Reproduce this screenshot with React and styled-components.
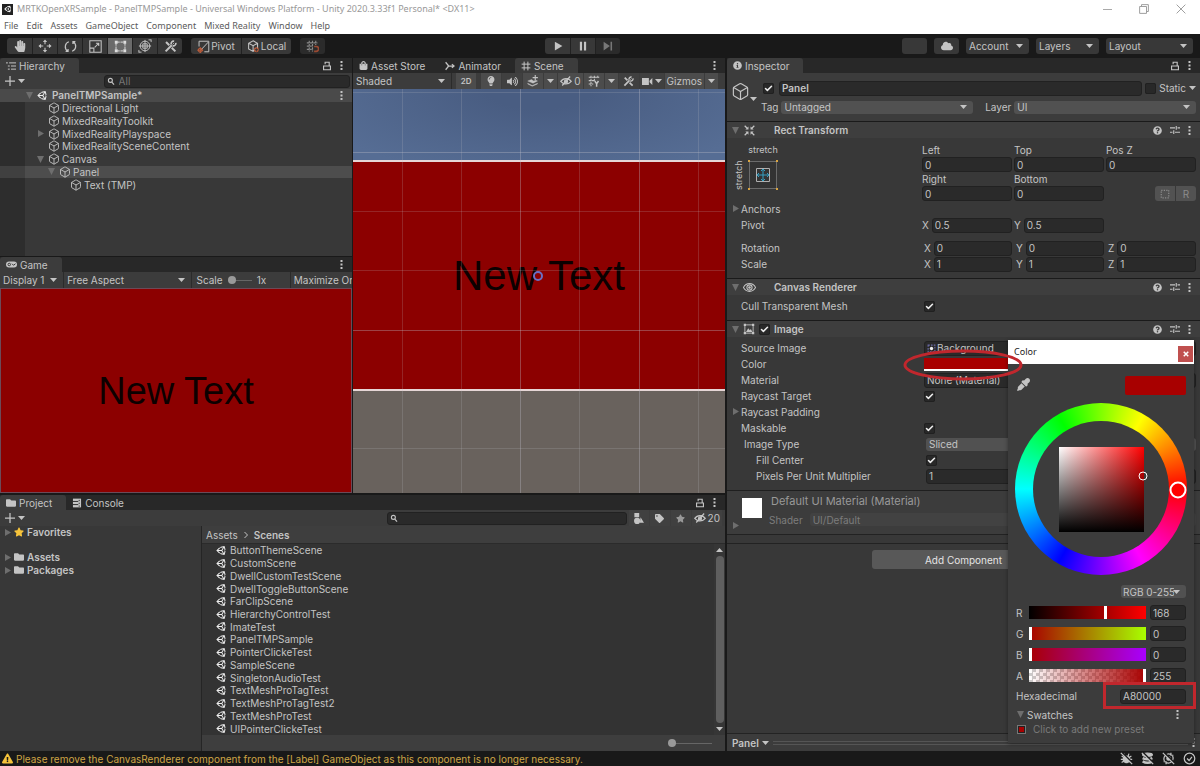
import React, { useId } from "react";
import styled, { createGlobalStyle, css } from "styled-components";
import { Box, Check } from "lucide-react";
import {
  FaCloud,
  FaEyeDropper,
  FaFolder,
  FaHandPaper,
  FaInfoCircle,
  FaLightbulb,
  FaQuestionCircle,
  FaShoppingBag,
  FaStar,
  FaTag,
  FaUnity,
  FaVolumeUp,
  FaExclamationTriangle,
} from "react-icons/fa";

const scenes = [
  "ButtonThemeScene",
  "CustomScene",
  "DwellCustomTestScene",
  "DwellToggleButtonScene",
  "FarClipScene",
  "HierarchyControlTest",
  "ImateTest",
  "PanelTMPSample",
  "PointerClickeTest",
  "SampleScene",
  "SingletonAudioTest",
  "TextMeshProTagTest",
  "TextMeshProTagTest2",
  "TextMeshProTest",
  "UIPointerClickeTest",
];

const tree = [
  { name: "Directional Light", level: 1 },
  { name: "MixedRealityToolkit", level: 1 },
  { name: "MixedRealityPlayspace", level: 1, fold: "closed" },
  { name: "MixedRealitySceneContent", level: 1 },
  { name: "Canvas", level: 1, fold: "open" },
  { name: "Panel", level: 2, fold: "open", selected: true },
  { name: "Text (TMP)", level: 3 },
];

const menus = ["File", "Edit", "Assets", "GameObject", "Component", "Mixed Reality", "Window", "Help"];

/* ---------- icons ---------- */

const Svg = ({ size = 12, width, children, ...rest }) => (
  <svg
    width={width || size}
    height={size}
    viewBox={`0 0 ${width ? (16 * width) / size : 16} 16`}
    fill="none"
    stroke="currentColor"
    strokeWidth="1.5"
    aria-hidden="true"
    {...rest}
  >
    {children}
  </svg>
);

const Caret = () => (
  <svg width="7" height="4" viewBox="0 0 7 4" aria-hidden="true">
    <path d="M0 0h7L3.5 4z" fill="currentColor" />
  </svg>
);

const Fold = ({ open }) => (
  <svg width="7" height="7" viewBox="0 0 7 7" aria-hidden="true">
    <path d={open ? "M0 0h7L3.5 7z" : "M1 0v7l6-3.5z"} fill="#6e6e6e" />
  </svg>
);

const Kebab = () => (
  <svg width="3" height="11" viewBox="0 0 3 11" fill="currentColor" aria-hidden="true">
    <path d="M0.5 1h2v2h-2zM0.5 4.5h2v2h-2zM0.5 8h2v2h-2z" />
  </svg>
);

const Lock = () => (
  <Svg size={10} strokeWidth="1.8">
    <path d="M2.500 8h11v6h-11zM5 5V2h6.500v6" />
  </Svg>
);

const Search = () => (
  <Svg size={9} width={10}>
    <circle cx="6" cy="6" r="3.5" strokeWidth="2" />
    <path d="M8.5 9l4 4.5" strokeWidth="2.2" />
  </Svg>
);

const Move = () => (
  <Svg size={14} strokeWidth="1.3">
    <path d="M8 2v4M8 10v4M2 8h4M10 8h4" />
    <path d="M8 .5l2.5 3h-5zM8 15.5l2.5-3h-5zM.5 8l3-2.5v5zM15.5 8l-3-2.5v5z" fill="currentColor" stroke="none" />
  </Svg>
);

const Rotate = () => (
  <Svg size={13}>
    <path d="M4.5 13.5A6.3 6.3 0 0 1 6 2.2M11.5 2.5A6.3 6.3 0 0 1 10 13.8M2 14h3v-3M14 2h-3v3" />
  </Svg>
);

const Scale = () => (
  <Svg size={13} strokeWidth="1.3">
    <path d="M1 1h14v14H1zM1 10h5v5M7 9l5-5M8.5 4H12v3.5" />
  </Svg>
);

const RectTool = () => (
  <Svg size={13} strokeWidth="1.5">
    <path d="M4 2.5h8M4 13.5h8M2.500 4v8M13.5 4v8" strokeDasharray="3 1" />
    <path d="M1 1h3.500v3.500H1zM11.500 1H15v3.500h-3.500zM1 11.500h3.500V15H1zM11.500 11.500H15V15h-3.500z" fill="#ddd" stroke="none" />
  </Svg>
);

const TransformTool = () => (
  <Svg size={14} strokeWidth="1.1">
    <circle cx="8" cy="8" r="5.5" />
    <path d="M8 1v14M1 8h14M5.5 5.5h5v5h-5zM1 15.500v-3M1 15h3M15 .5v3M15 1h-3" />
  </Svg>
);

const Tools = ({ size = 13 }) => (
  <Svg size={size}>
    <path d="M2.5 2.5l4 4M9.5 9.5l4.5 4.5" strokeWidth="2.5" />
    <path d="M2 14l7.5-7.5" strokeWidth="2.5" />
    <path d="M14.5 3.5a3 3 0 0 1-4 3.5M12.5 1.5a3 3 0 0 0-3.5 4" strokeWidth="2" />
    <path d="M12.5 3.5l-2 2" strokeWidth="1" />
  </Svg>
);

const PivotIcon = () => (
  <Svg size={13} strokeWidth="1.2">
    <path d="M2.5 8V1.5h12v13H9M5 12l9-9.5" />
    <circle cx="4" cy="12.5" r="2.5" stroke="#c8603c" />
    <path d="M.5 12.5h7M4 9v7" stroke="#c8603c" />
  </Svg>
);

const LocalIcon = () => (
  <Svg size={13} strokeWidth="1.3">
    <path d="M7.5 1l5.5 3v6l-5.5 4L2 11V4zM2 4l5.5 3L13 4M7.5 7v7" />
    <circle cx="11.5" cy="12" r="3" fill="#c8603c" stroke="none" />
    <path d="M11.5 10v4M9.5 12h4" stroke="#383838" />
  </Svg>
);

const SnapIcon = () => (
  <Svg size={13} strokeWidth="1.4">
    <path d="M4 1v13M8 1v13M12 1v5M1 3.5h13M1 7.5h6M1 11.5h6" strokeDasharray="3 1" stroke="#8c8c8c" />
    <path d="M10 8h2.5a2.5 2.5 0 0 1 0 6H10" stroke="#9a4a32" strokeWidth="2" />
  </Svg>
);

const ListIcon = () => (
  <Svg size={10} strokeWidth="1.6">
    <path d="M5 3h11M8 8h8M8 13h8M0 3h3M3 8h3M3 13h3" />
  </Svg>
);

const AnimatorIcon = () => (
  <Svg size={10}>
    <path d="M1 2l5 6-5 6M4 8h10M11 5l3.5 3-3.5 3" strokeWidth="2" />
  </Svg>
);

const HashIcon = () => (
  <Svg size={10}>
    <path d="M5 1v14M11 1v14M1 5h14M1 11h14" strokeWidth="1.6" />
  </Svg>
);

const GamepadIcon = () => (
  <svg width="11" height="7" viewBox="0 0 22 14" fill="none" stroke="currentColor" aria-hidden="true">
    <rect x="0" y="1" width="22" height="12" rx="6" fill="currentColor" stroke="none" />
    <circle cx="6.5" cy="7" r="2.5" stroke="#383838" strokeWidth="2" />
    <path d="M12 5.5l3 3 4-3" stroke="#383838" strokeWidth="2" />
  </svg>
);

const EffectsIcon = () => (
  <Svg size={12}>
    <path d="M1 8l5-2 3 2 3-1 2 1-6 3zM1 11l6 3 7-3v1l-7 3-6-3z" fill="currentColor" strokeWidth=".5" />
    <path d="M11 0v7M7.500 3.5h7" strokeWidth="1.5" />
  </Svg>
);

const EyeSlash = () => (
  <Svg size={12} strokeWidth="1.6">
    <path d="M1 8.5C4.5 3.5 11.5 3.5 15 8.5 11.5 13 4.5 13 1 8.5zM3 14L13.5 2" />
    <circle cx="8" cy="8.5" r="2" fill="currentColor" />
  </Svg>
);

const EyeIcon = () => (
  <Svg size={13} strokeWidth="1.3">
    <path d="M.5 8C4 1.5 12 1.5 15.5 8 12 14.5 4 14.5.5 8z" />
    <circle cx="8" cy="8" r="3.2" />
    <circle cx="8" cy="8" r="1" fill="currentColor" />
  </Svg>
);

const GridY = () => (
  <Svg size={12} strokeWidth="1.4">
    <path d="M4 1v14M8.5 1v7M13 1v4M1 3h14M1 7.5h8M1 12h6" strokeDasharray="3 1" />
    <path d="M9 8l2.5 3.5L14 8M11.5 11v4.5" strokeWidth="2" />
  </Svg>
);

const CameraIcon = () => (
  <Svg size={11}>
    <path d="M0 3h10v10H0zM11 7l4-4v10l-4-4z" fill="currentColor" stroke="none" />
  </Svg>
);

const ConsoleIcon = () => (
  <Svg size={10}>
    <path d="M1.5 1h13v14h-13z" fill="currentColor" stroke="none" />
    <path d="M1 5.5h9M1 10.5h9M11.5 3v2M11.5 7.5v2M11.5 12v2" stroke="#282828" />
  </Svg>
);

const ShapesIcon = () => (
  <Svg size={11}>
    <path d="M2 0h7v6H2zM11 6l5 8h-6z" fill="currentColor" stroke="none" />
    <circle cx="6" cy="11.5" r="4.5" fill="currentColor" stroke="none" />
  </Svg>
);

const RectTransformIcon = () => (
  <Svg size={11}>
    <path d="M1 1l4 4M15 1l-4 4M1 15l4-4M15 15l-4-4" strokeWidth="1.8" />
    <path d="M6.500 2v4.500H2zM9.500 2v4.500H14zM6.500 14V9.500H2zM9.500 14V9.500H14z" fill="currentColor" stroke="none" />
  </Svg>
);

const ImageIcon = () => (
  <Svg size={12} strokeWidth="1.2">
    <path d="M2.5 2.5h11v11h-11z" />
    <path d="M1 1h3v3H1zM12 1h3v3h-3zM1 12h3v3H1zM12 12h3v3h-3zM4 12l3-5 2 2.5 1.5-1.5 2 4z" fill="currentColor" stroke="none" />
  </Svg>
);

const SliderIcon = () => (
  <Svg size={10}>
    <path d="M0 4.5h8M12 4.5h4M0 11.5h4M8 11.5h8M10 1.5v6M6 8.5v6" strokeWidth="1.8" />
  </Svg>
);

const Struck = ({ children }) => (
  <Svg size={13}>
    {children}
    <path d="M2.500 .5l13 13" stroke="#191919" strokeWidth="2" />
    <path d="M1 1l14 14" strokeWidth="1.5" />
  </Svg>
);

/* ---------- shell ---------- */

const GlobalStyle = createGlobalStyle`
  * { box-sizing: border-box; }
  body {
    margin: 0;
    background: #191919;
    color: #c4c4c4;
    font: 10px/12px Inter, "Liberation Sans", sans-serif;
  }
  button, input, select {
    margin: 0;
    padding: 0;
    border: 0;
    color: inherit;
    font: inherit;
    background: none;
  }
  svg { flex: none; }
`;

const App = () => (
  <Editor>
    <GlobalStyle />
    <TitleBar>
      <AppIcon>
        <FaUnity size={8} />
      </AppIcon>
      <Title>MRTKOpenXRSample - PanelTMPSample - Universal Windows Platform - Unity 2020.3.33f1 Personal* &lt;DX11&gt;</Title>
      <WindowButtons>
        <button aria-label="Minimize">
          <Svg size={9}><path d="M0 8h16" /></Svg>
        </button>
        <button aria-label="Restore">
          <Svg size={10}><path d="M1 4h11v11H1zM4 4V1h11v11h-3" /></Svg>
        </button>
        <button aria-label="Close">
          <Svg size={10}><path d="M1 1l14 14M15 1L1 15" /></Svg>
        </button>
      </WindowButtons>
    </TitleBar>
    <MenuBar>
      {menus.map((m) => (
        <button key={m}>{m}</button>
      ))}
    </MenuBar>
    <MainToolbar />
    <Workspace>
      <Left>
        <Upper>
          <Stack>
            <Hierarchy />
            <Game />
          </Stack>
          <Scene />
        </Upper>
        <Project />
      </Left>
      <Inspector />
    </Workspace>
    <StatusBar>
      <FaExclamationTriangle size={11} color="#f5c33b" />
      <StatusText>
        Please remove the CanvasRenderer component from the [Label] GameObject as this component is no longer necessary.
      </StatusText>
      <Struck>
        <circle cx="8" cy="9" r="4" fill="currentColor" />
        <path d="M2 5l12 8M14 5L2 13M1 9h14M5 2l1 3M11 2l-1 3" />
      </Struck>
      <Struck>
        <ellipse cx="8" cy="3.500" rx="6" ry="2" fill="currentColor" />
        <path d="M2 7.500q6 3 12 0M2 11.500q6 3.500 12 0" strokeWidth="3" />
      </Struck>
      <Struck>
        <path d="M3 11a6 6 0 0 1 8-8M13 5a6 6 0 0 1-8 8M11 1v3h3M5 15v-3H2" />
        <circle cx="8" cy="8" r="2" fill="currentColor" />
      </Struck>
      <Svg size={13}>
        <circle cx="8" cy="8" r="6.5" />
        <path d="M5 8l2.5 2.5L11 6" />
      </Svg>
    </StatusBar>
  </Editor>
);

const MainToolbar = () => (
  <ToolStrip>
    <ToolSide>
      <Group>
        <Tool aria-label="Hand"><FaHandPaper size={12} /></Tool>
        <Tool aria-label="Move"><Move /></Tool>
        <Tool aria-label="Rotate"><Rotate /></Tool>
        <Tool aria-label="Scale"><Scale /></Tool>
        <Tool aria-label="Rect" $on><RectTool /></Tool>
        <Tool aria-label="Transform"><TransformTool /></Tool>
        <Tool aria-label="Custom tools"><Tools /></Tool>
      </Group>
      <Group>
        <Tool $wide><PivotIcon />Pivot</Tool>
        <Tool $wide><LocalIcon />Local</Tool>
      </Group>
      <Group>
        <Tool aria-label="Snap" $off><SnapIcon /></Tool>
      </Group>
    </ToolSide>
    <Group>
      <Tool aria-label="Play">
        <Svg size={10}><path d="M3 1l12 7-12 7z" fill="currentColor" stroke="none" /></Svg>
      </Tool>
      <Tool aria-label="Pause">
        <Svg size={10}><path d="M3 1h3.5v14H3zM9.5 1H13v14H9.5z" fill="currentColor" stroke="none" /></Svg>
      </Tool>
      <Tool aria-label="Step" $off>
        <Svg size={10}><path d="M1 1l10 7-10 7zM12 1h2.5v14H12z" fill="currentColor" stroke="none" /></Svg>
      </Tool>
    </Group>
    <ToolSide $end>
      <Group><Tool aria-label="Collab" /></Group>
      <Group><Tool aria-label="Services"><FaCloud size={12} /></Tool></Group>
      <BarSelect><Dropdown label="Account" tone="#383838" /></BarSelect>
      <BarSelect><Dropdown label="Layers" tone="#383838" /></BarSelect>
      <BarSelect $wide><Dropdown label="Layout" tone="#383838" /></BarSelect>
    </ToolSide>
  </ToolStrip>
);

const Dropdown = ({ label, name, tone, id, grow }) => (
  <Drop $tone={tone} $grow={grow}>
    <select id={id} aria-label={id ? undefined : name || label} defaultValue={label}>
      <option>{label}</option>
    </select>
    <Caret />
  </Drop>
);

const CheckBox = ({ checked, label, id }) => (
  <Tick>
    <input type="checkbox" id={id} aria-label={label} defaultChecked={checked} />
    {checked && <Check size={9} strokeWidth={4} />}
  </Tick>
);

/* ---------- left side ---------- */

const Hierarchy = () => (
  <Pane $grow={198}>
    <Tabs>
      <Tab $on><ListIcon />Hierarchy</Tab>
      <TabTools><Lock /><Kebab /></TabTools>
    </Tabs>
    <PaneBar>
      <AddButton aria-label="Create">
        <Svg size={10}><path d="M8 0v16M0 8h16" strokeWidth="2" /></Svg>
        <Caret />
      </AddButton>
      <SearchBox $wide>
        <Search />
        <input aria-label="Search hierarchy" placeholder="All" />
      </SearchBox>
    </PaneBar>
    <TreeWell>
      <Tree>
        <Node $root>
          <FoldSlot><Fold open /></FoldSlot>
          <FaUnity size={11} color="#eee" />
          <b>PanelTMPSample*</b>
          <NodeMenu><Kebab /></NodeMenu>
        </Node>
        {tree.map((n) => (
          <Node key={n.name} $level={n.level} $selected={n.selected}>
            <FoldSlot>{n.fold && <Fold open={n.fold === "open"} />}</FoldSlot>
            <Box size={12} strokeWidth={1.8} />
            {n.name}
          </Node>
        ))}
      </Tree>
    </TreeWell>
  </Pane>
);

const Game = () => (
  <Pane $grow={236}>
    <Tabs>
      <Tab $on><GamepadIcon />Game</Tab>
      <TabTools><Kebab /></TabTools>
    </Tabs>
    <GameBar>
      <Dropdown label="Display 1" tone="transparent" />
      <Dropdown label="Free Aspect" tone="transparent" />
      <ScaleLabel>
        Scale
        <Slider type="range" defaultValue="0" />
        1x
      </ScaleLabel>
      <button>Maximize On</button>
    </GameBar>
    <GameView>New Text</GameView>
  </Pane>
);

const Scene = () => (
  <ScenePane>
    <Tabs>
      <Tab><FaShoppingBag size={9} />Asset Store</Tab>
      <Tab><AnimatorIcon />Animator</Tab>
      <Tab $on><HashIcon />Scene</Tab>
      <TabTools><Kebab /></TabTools>
    </Tabs>
    <SceneBar>
      <ShadeSelect><Dropdown label="Shaded" tone="transparent" /></ShadeSelect>
      <Mini $on>
        <small>2D</small>
      </Mini>
      <BarGap />
      <Mini $on aria-label="Lighting"><FaLightbulb size={10} /></Mini>
      <Mini aria-label="Audio"><FaVolumeUp size={11} /></Mini>
      <Mini $on aria-label="Effects"><EffectsIcon /></Mini>
      <Mini $on $slim aria-label="Effects menu"><Caret /></Mini>
      <Mini $on><EyeSlash />0</Mini>
      <Mini $on aria-label="Grid"><GridY /></Mini>
      <Mini $on $slim aria-label="Grid menu"><Caret /></Mini>
      <Mini aria-label="Component tools"><Tools size={11} /></Mini>
      <Mini aria-label="Camera"><CameraIcon /><Caret /></Mini>
      <Mini $on>Gizmos</Mini>
      <Mini $on $slim aria-label="Gizmos menu"><Caret /></Mini>
    </SceneBar>
    <SceneView>
      <Sky />
      <Quad>New Text</Quad>
      <Ground />
      <GridLines viewBox="0 0 372 404" preserveAspectRatio="none" aria-hidden="true">
        <path d="M49.5 0v404M108.5 0v404M226.5 0v404M345.5 0v404M0 3.5h372M0 122.5h372M0 181.5h372M0 359.5h372" opacity=".55" />
        <path d="M167.5 0v404M286.5 0v404M0 63.5h372M0 241.5h372" />
      </GridLines>
      <Gizmo />
    </SceneView>
  </ScenePane>
);

const Project = () => (
  <ProjectPane>
    <Tabs>
      <Tab $on><FaFolder size={10} />Project</Tab>
      <Tab><ConsoleIcon />Console</Tab>
      <TabTools><Lock /><Kebab /></TabTools>
    </Tabs>
    <PaneBar>
      <AddButton aria-label="Create asset">
        <Svg size={10}><path d="M8 0v16M0 8h16" strokeWidth="2" /></Svg>
        <Caret />
      </AddButton>
      <SearchBox>
        <Search />
        <input aria-label="Search project" />
      </SearchBox>
      <Filters>
        <Mini aria-label="Search by type"><ShapesIcon /></Mini>
        <Mini aria-label="Search by label"><FaTag size={9} /></Mini>
        <Mini aria-label="Save search"><FaStar size={9} color="#999" /></Mini>
        <Mini><EyeSlash />20</Mini>
      </Filters>
    </PaneBar>
    <Browser>
      <Folders>
        <FolderRow $gap><Fold /><FaStar size={10} color="#f5c33b" />Favorites</FolderRow>
        <FolderRow><Fold /><FaFolder size={10} />Assets</FolderRow>
        <FolderRow><Fold /><FaFolder size={10} />Packages</FolderRow>
      </Folders>
      <Files>
        <Crumbs>
          Assets
          <Svg size={8}><path d="M5 2l6 6-6 6" strokeWidth="2" /></Svg>
          <b>Scenes</b>
        </Crumbs>
        <FileArea>
          <FileList>
            {scenes.map((s) => (
              <li key={s}>
                <FaUnity size={11} color="#eee" />
                {s}
              </li>
            ))}
          </FileList>
          <ScrollTrack>
            <Flip><Caret /></Flip>
            <ScrollThumb />
            <Caret />
          </ScrollTrack>
        </FileArea>
        <FileFooter>
          <Slider type="range" defaultValue="0" aria-label="Icon size" />
        </FileFooter>
      </Files>
    </Browser>
  </ProjectPane>
);

/* ---------- inspector ---------- */

const CompHeader = ({ icon, title, check }) => (
  <CompBar>
    <FoldSlot><Fold open /></FoldSlot>
    <IconSlot>{icon}</IconSlot>
    <CheckSlot>{check && <CheckBox checked label={`${title} enabled`} />}</CheckSlot>
    <b>{title}</b>
    <CompTools>
      <FaQuestionCircle size={9} />
      <SliderIcon />
      <Kebab />
    </CompTools>
  </CompBar>
);

const Row = ({ label, indent, fold, children }) => {
  const id = useId();
  return (
    <PropRow>
      <PropLabel htmlFor={children ? id : undefined} $indent={indent}>
        {fold && <PropFold><Fold /></PropFold>}
        {label}
      </PropLabel>
      {children && <PropValue $indent={indent}>{children(id)}</PropValue>}
    </PropRow>
  );
};

const Vector = ({ label, axes, value, inset }) => (
  <PropRow>
    <PropLabel as="span">{label}</PropLabel>
    <Triple>
      {axes.map((a) => (
        <Axis key={a} $inset={inset}>
          {a}
          <Field defaultValue={value} />
        </Axis>
      ))}
    </Triple>
  </PropRow>
);

const Edge = ({ label, value = "0" }) => (
  <EdgeLabel>
    {label}
    <Field defaultValue={value} />
  </EdgeLabel>
);

const Inspector = () => (
  <InspectorPane>
    <Tabs>
      <Tab $on><FaInfoCircle size={9} />Inspector</Tab>
      <TabTools><Lock /><Kebab /></TabTools>
    </Tabs>
    <ObjectHeader>
      <BigCube>
        <Box size={19} strokeWidth={1.5} />
        <Caret />
      </BigCube>
      <HeaderRows>
        <HeaderRow $inset>
          <CheckBox checked label="Active" />
          <NameField aria-label="Name" defaultValue="Panel" />
          <StaticLabel>
            <CheckBox />
            Static
          </StaticLabel>
          <Caret />
        </HeaderRow>
        <HeaderRow>
          <label htmlFor="tag">Tag</label>
          <Dropdown id="tag" label="Untagged" grow={191} />
          <LayerLabel htmlFor="layer">Layer</LayerLabel>
          <Dropdown id="layer" label="UI" grow={181} />
        </HeaderRow>
      </HeaderRows>
    </ObjectHeader>

    <CompHeader icon={<RectTransformIcon />} title="Rect Transform" />
    <CompBody $rect>
      <PropRow>
        <AnchorPreset>
          <span>stretch</span>
          <Sideways>stretch</Sideways>
          <svg width="30" height="30" viewBox="0 0 30 30" fill="none" aria-hidden="true">
            <path d="M1.5 1.5h27v27h-27z" fill="#333" stroke="#6b6b6b" />
            <path d="M8.5 8.5h13v13h-13z" stroke="#b0b0b0" />
            <path d="M15 9v12M9 15h12M13 11l2-2 2 2M13 19l2 2 2-2M11 13l-2 2 2 2M19 13l2 2-2 2" stroke="#35a1c4" />
            <path d="M0 0h2v2H0zM28 0h2v2h-2zM0 28h2v2H0zM28 28h2v2h-2z" fill="#d9a441" />
          </svg>
        </AnchorPreset>
        <EdgeGrid>
          <Edge label="Left" />
          <Edge label="Top" />
          <Edge label="Pos Z" />
          <Edge label="Right" />
          <Edge label="Bottom" />
          <ModeButtons>
            <button aria-label="Blueprint mode">
              <Svg size={10}><path d="M2 2h12v12H2z" strokeDasharray="2 2" strokeWidth="2" /></Svg>
            </button>
            <button>R</button>
          </ModeButtons>
        </EdgeGrid>
      </PropRow>
      <Row label="Anchors" fold />
      <Vector label="Pivot" axes={["X", "Y"]} value="0.5" />
      <Space />
      <Vector label="Rotation" axes={["X", "Y", "Z"]} value="0" inset />
      <Vector label="Scale" axes={["X", "Y", "Z"]} value="1" inset />
    </CompBody>

    <CompHeader icon={<EyeIcon />} title="Canvas Renderer" />
    <CompBody>
      <Row label="Cull Transparent Mesh">{(id) => <CheckBox checked id={id} />}</Row>
    </CompBody>

    <CompHeader icon={<ImageIcon />} title="Image" check />
    <CompBody>
      <Row label="Source Image">
        {(id) => (
          <ObjectField id={id}>
            <Svg size={9}>
              <path d="M2 2h12v12H2z" stroke="#6c6ca8" strokeWidth="2" strokeDasharray="3 2" />
              <circle cx="8" cy="8" r="3" fill="#eee" stroke="none" />
            </Svg>
            Background
          </ObjectField>
        )}
      </Row>
      <Row label="Color">
        {(id) => (
          <>
            <ColorButton id={id} />
            <Ellipse viewBox="0 0 120 32" aria-hidden="true">
              <ellipse cx="60" cy="16" rx="58" ry="14" />
            </Ellipse>
          </>
        )}
      </Row>
      <Row label="Material">{(id) => <ObjectField id={id}>None (Material)</ObjectField>}</Row>
      <Row label="Raycast Target">{(id) => <CheckBox checked id={id} />}</Row>
      <Row label="Raycast Padding" fold />
      <Row label="Maskable">{(id) => <CheckBox checked id={id} />}</Row>
      <Row label="Image Type" indent={3}>{(id) => <Dropdown id={id} label="Sliced" />}</Row>
      <Row label="Fill Center" indent={15}>{(id) => <CheckBox checked id={id} />}</Row>
      <Row label="Pixels Per Unit Multiplier" indent={15}>{(id) => <Field id={id} defaultValue="1" />}</Row>
    </CompBody>

    <MaterialHeader>
      <FoldSlot><Fold /></FoldSlot>
      <Preview />
      <MaterialInfo>
        <MaterialName>Default UI Material (Material)</MaterialName>
        <ShaderRow>
          <label htmlFor="shader">Shader</label>
          <Dropdown id="shader" label="UI/Default" tone="#424242" />
        </ShaderRow>
      </MaterialInfo>
    </MaterialHeader>
    <Strip />
    <AddComponent>Add Component</AddComponent>
    <PreviewBar>
      <button>Panel <Caret /></button>
      <Grip />
      <Kebab />
    </PreviewBar>
    <ColorPicker />
  </InspectorPane>
);

const channels = [
  { name: "R", value: 168, track: "linear-gradient(90deg, #000, #f00)" },
  { name: "G", value: 0, track: "linear-gradient(90deg, #a80000, #a8ff00)" },
  { name: "B", value: 0, track: "linear-gradient(90deg, #a80000, #a800ff)" },
  {
    name: "A",
    value: 255,
    track:
      "linear-gradient(90deg, transparent, #a80000), repeating-conic-gradient(#ccc 0 25%, #fff 0 50%) 0 0 / 7px 7px",
  },
];

const ColorPicker = () => (
  <Picker>
    <PickerTitle>
      Color
      <button aria-label="Close">
        <Svg size={6}><path d="M2 2l12 12M14 2L2 14" strokeWidth="4" /></Svg>
      </button>
    </PickerTitle>
    <PickerTop>
      <button aria-label="Pick from screen"><FaEyeDropper size={13} /></button>
      <CurrentColor />
    </PickerTop>
    <Wheel>
      <WheelHole>
        <Shade />
      </WheelHole>
      <Knob $size={17} $x={163} $y={87} $fill="#f00" />
      <Knob $size={9} $x={128} $y={73} />
    </Wheel>
    <ModeSelect><Dropdown name="Color mode" label="RGB 0-255" /></ModeSelect>
    {channels.map((c) => (
      <Channel key={c.name}>
        <label htmlFor={`ch-${c.name}`}>{c.name}</label>
        <ChannelSlider id={`ch-${c.name}`} type="range" max="255" defaultValue={c.value} $track={c.track} />
        <Field aria-label={`${c.name} value`} defaultValue={c.value} />
      </Channel>
    ))}
    <HexRow>
      <label htmlFor="hex">Hexadecimal</label>
      <Field id="hex" defaultValue="A80000" />
      <HexFrame />
    </HexRow>
    <SwatchHead>
      <Fold open />
      Swatches
      <Kebab />
    </SwatchHead>
    <PresetRow>
      <Preset aria-label="Add preset" />
      Click to add new preset
    </PresetRow>
  </Picker>
);

/* ---------- styles ---------- */

const Editor = styled.div`
  display: flex;
  flex-direction: column;
  height: 100vh;
  min-height: 720px;
  overflow: hidden;
`;
const TitleBar = styled.header`
  display: flex;
  align-items: center;
  gap: 4px;
  height: 18px;
  padding: 0 14px 0 2px;
  background: #fff;
  color: #999;
  font-family: "Noto Sans", sans-serif;
`;
const AppIcon = styled.span`
  display: grid;
  place-items: center;
  width: 11px;
  height: 11px;
  background: #222;
  color: #fff;
`;
const Title = styled.h1`
  flex: 1;
  margin: 0;
  font-size: 9px;
  font-weight: 400;
  white-space: nowrap;
`;
const WindowButtons = styled.div`
  display: flex;
  gap: 27px;
  button {
    display: flex;
    align-items: center;
  }
`;
const MenuBar = styled.nav`
  display: flex;
  gap: 8px;
  height: 16px;
  padding: 0 4px;
  background: #fff;
  color: #5c5c5c;
  font-family: "Noto Sans", sans-serif;
  font-size: 9px;
`;
const ToolStrip = styled.div`
  display: grid;
  grid-template-columns: 545fr auto 580fr;
  align-items: center;
  height: 24px;
  padding: 0 7px;
  background: #191919;
`;
const ToolSide = styled.div`
  display: flex;
  gap: ${(p) => (p.$end ? 7 : 9)}px;
  justify-content: ${(p) => (p.$end ? "flex-end" : "flex-start")};
`;
const Group = styled.div`
  display: flex;
  border-radius: 3px;
  overflow: hidden;
`;
const Tool = styled.button`
  display: flex;
  align-items: center;
  justify-content: center;
  gap: 1px;
  width: ${(p) => (p.$wide ? 50 : 25)}px;
  height: 16px;
  background: ${(p) => (p.$on ? "#6a6a6a" : p.$off ? "#2b2b2b" : "#383838")};
  ${(p) => p.$off && "color: #777;"}
  & + & {
    border-left: 1px solid #212121;
  }
`;
const BarSelect = styled.div`
  display: flex;
  width: ${(p) => (p.$wide ? 87 : 63)}px;
  select {
    height: 16px;
    padding-left: 4px;
  }
`;
const Drop = styled.span`
  display: grid;
  flex: ${(p) => p.$grow || 1} 1 0;
  grid-template-columns: 1fr 13px;
  align-items: center;
  min-width: 0;
  border-radius: 3px;
  background: ${(p) => p.$tone || "#515151"};
  select {
    grid-area: 1 / 1 / 2 / 3;
    width: 100%;
    height: 13px;
    padding: 0 12px 0 3px;
    appearance: none;
  }
  svg {
    grid-area: 1 / 2;
    pointer-events: none;
  }
`;
const Workspace = styled.main`
  display: flex;
  flex: 1;
  gap: 2px;
  min-height: 0;
`;
const Left = styled.div`
  display: flex;
  flex: 725 1 0;
  flex-direction: column;
  gap: 2px;
  min-width: 0;
`;
const Upper = styled.div`
  display: flex;
  flex: 435 1 0;
  gap: 1px;
  min-height: 0;
`;
const Stack = styled.div`
  display: flex;
  flex: 352 1 0;
  flex-direction: column;
  gap: 1px;
  min-width: 0;
`;
const pane = css`
  display: flex;
  flex-direction: column;
  min-width: 0;
  min-height: 0;
  background: #383838;
`;
const Pane = styled.section`
  ${pane}
  flex: ${(p) => p.$grow} 1 0;
`;
const ScenePane = styled.section`
  ${pane}
  flex: 372 1 0;
`;
const ProjectPane = styled.section`
  ${pane}
  flex: 256 1 0;
`;
const InspectorPane = styled.section`
  ${pane}
  position: relative;
  flex: 473 1 0;
`;
const Tabs = styled.div`
  display: flex;
  flex: none;
  height: 15px;
  background: #282828;
`;
const Tab = styled.button`
  display: flex;
  align-items: center;
  gap: 3px;
  padding: 0 14px 0 6px;
  border-radius: 3px 3px 0 0;
  background: ${(p) => (p.$on ? "#3c3c3c" : "transparent")};
`;
const TabTools = styled.div`
  display: flex;
  align-items: center;
  gap: 8px;
  margin-left: auto;
  padding-right: 9px;
`;
const PaneBar = styled.div`
  display: flex;
  flex: none;
  align-items: center;
  height: 16px;
  background: #3c3c3c;
`;
const AddButton = styled.button`
  display: flex;
  align-items: center;
  gap: 3px;
  padding-left: 5px;
`;
const SearchBox = styled.label`
  display: flex;
  flex: ${(p) => (p.$wide ? "none" : "0 1 240px")};
  align-items: center;
  gap: 2px;
  width: ${(p) => (p.$wide ? "70%" : "auto")};
  height: 13px;
  margin-right: 2px;
  margin-left: auto;
  padding: 0 2px;
  border: 1px solid #212121;
  border-radius: 3px;
  background: #2a2a2a;
  input {
    width: 100%;
    min-width: 0;
    outline: 0;
  }
  input::placeholder {
    color: #777;
  }
`;
const Filters = styled.div`
  display: flex;
  gap: 1px;
  padding-right: 3px;
`;
const TreeWell = styled.div`
  flex: 1;
  background: linear-gradient(90deg, #2d2d2d 25px, #383838 25px);
`;
const Tree = styled.ul`
  display: grid;
  grid-template-rows: repeat(8, 1fr);
  height: 102px;
  margin: 0;
  padding: 0;
  list-style: none;
`;
const Node = styled.li`
  display: flex;
  align-items: center;
  gap: 2px;
  padding-left: ${(p) => 23 + (p.$level || 0) * 11}px;
  background: ${(p) =>
    p.$root ? "#4a4a4a" : p.$selected ? "linear-gradient(90deg, #404040 25px, #4d4d4d 25px)" : "none"};
  b {
    margin-left: 2px;
    font-weight: 600;
  }
`;
const NodeMenu = styled.span`
  display: flex;
  margin-left: auto;
  padding-right: 9px;
`;
const FoldSlot = styled.span`
  display: grid;
  flex: none;
  place-items: center;
  width: 12px;
`;
const GameBar = styled.div`
  display: grid;
  flex: none;
  grid-template-columns: 64fr 127fr 99fr 61fr;
  height: 16px;
  overflow: hidden;
  background: #3c3c3c;
  > * {
    border-right: 1px solid #2b2b2b;
    border-radius: 0;
  }
  button {
    min-width: 0;
    padding-left: 3px;
    border: 0;
    text-align: left;
    white-space: nowrap;
  }
`;
const ScaleLabel = styled.label`
  display: flex;
  align-items: center;
  gap: 5px;
  padding-left: 5px;
`;
const Slider = styled.input`
  width: ${(p) => (p["aria-label"] ? 44 : 24)}px;
  height: 9px;
  appearance: none;
  background: linear-gradient(#666, #666) center / 100% 1px no-repeat;
  &::-webkit-slider-thumb {
    width: 8px;
    height: 8px;
    border-radius: 50%;
    background: #999;
    appearance: none;
  }
`;
const GameView = styled.div`
  display: grid;
  flex: 1;
  place-items: center;
  border: 1px solid #6c4a58;
  background: #8c0000;
  color: #0c0000;
  font: 38px/44px "Liberation Sans", Arial, sans-serif;
`;
const SceneBar = styled.div`
  display: flex;
  flex: none;
  height: 16px;
  gap: 1px;
  padding-right: 7px;
  background: #3c3c3c;
`;
const ShadeSelect = styled.div`
  display: flex;
  flex: 1;
  margin-right: 3px;
  border-right: 1px solid #2b2b2b;
`;
const BarGap = styled.span`
  width: 3px;
`;
const Mini = styled.button`
  display: flex;
  align-items: center;
  justify-content: center;
  gap: 2px;
  min-width: ${(p) => (p.$slim ? 13 : 20)}px;
  height: 16px;
  padding: 0 2px;
  background: ${(p) => (p.$on ? "#4c4c4c" : "#404040")};
  small {
    font-size: 8px;
    font-weight: 600;
  }
`;
const SceneView = styled.div`
  position: relative;
  display: flex;
  flex: 1;
  flex-direction: column;
  min-height: 0;
`;
const Sky = styled.div`
  flex: 72 1 0;
  background: radial-gradient(ellipse at 50% 0, #495d82 20%, #566d94 90%);
`;
const Quad = styled.div`
  display: grid;
  flex: 229 1 0;
  place-items: center;
  border: solid #e6d6d6;
  border-width: 2px 0;
  background: #8c0000;
  color: #0c0000;
  font: 42px/48px "Liberation Sans", Arial, sans-serif;
`;
const Ground = styled.div`
  flex: 103 1 0;
  background: #69625d;
`;
const GridLines = styled.svg`
  position: absolute;
  inset: 0;
  width: 100%;
  height: 100%;
  fill: none;
  stroke: rgba(190, 190, 200, 0.35);
`;
const Gizmo = styled.span`
  position: absolute;
  top: 45%;
  left: 50%;
  width: 10px;
  height: 10px;
  margin-left: -6px;
  border: 2px solid #6b6fc4;
  border-radius: 50%;
`;
const Browser = styled.div`
  display: flex;
  flex: 1;
  min-height: 0;
`;
const Folders = styled.div`
  flex: 201 1 0;
  border-right: 1px solid #252525;
`;
const FolderRow = styled.div`
  display: flex;
  align-items: center;
  gap: 3px;
  height: 12px;
  margin-bottom: ${(p) => (p.$gap ? 13 : 1)}px;
  padding-left: 4px;
  font-weight: 600;
`;
const Files = styled.div`
  display: flex;
  flex: 523 1 0;
  flex-direction: column;
  min-width: 0;
`;
const Crumbs = styled.div`
  display: flex;
  align-items: center;
  gap: 4px;
  height: 18px;
  padding-left: 4px;
  border-bottom: 1px solid #2b2b2b;
  background: #3e3e3e;
  b {
    font-weight: 600;
  }
`;
const FileArea = styled.div`
  display: flex;
  flex: 1;
  min-height: 0;
  background: #333;
`;
const FileList = styled.ul`
  display: grid;
  flex: 1;
  grid-template-rows: repeat(15, minmax(0, 1fr));
  margin: 0;
  padding: 0 0 0 14px;
  list-style: none;
  li {
    display: flex;
    align-items: center;
    gap: 3px;
  }
`;
const ScrollTrack = styled.div`
  display: flex;
  flex-direction: column;
  align-items: center;
  gap: 4px;
  width: 11px;
  padding: 4px 0;
  background: #363636;
`;
const Flip = styled.span`
  display: flex;
  transform: rotate(180deg);
`;
const ScrollThumb = styled.div`
  flex: 1;
  width: 8px;
  border-radius: 4px;
  background: #5f5f5f;
`;
const FileFooter = styled.div`
  display: flex;
  align-items: center;
  justify-content: flex-end;
  height: 16px;
  padding-right: 13px;
  background: #3e3e3e;
`;
const ObjectHeader = styled.div`
  display: flex;
  flex: none;
  height: 48px;
  padding: 7px 4px 0 4px;
  background: #3c3c3c;
`;
const BigCube = styled.div`
  display: flex;
  align-items: flex-end;
  width: 30px;
  height: 21px;
`;
const HeaderRows = styled.div`
  display: grid;
  flex: 1;
  grid-template-rows: 16px 22px;
  align-items: center;
`;
const HeaderRow = styled.div`
  display: flex;
  align-items: center;
  gap: 3px;
  padding-left: ${(p) => (p.$inset ? 2 : 0)}px;
`;
const LayerLabel = styled.label`
  margin-left: 9px;
`;
const StaticLabel = styled.label`
  display: flex;
  align-items: center;
  gap: 3px;
`;
const Field = styled.input`
  flex: 1;
  width: 100%;
  min-width: 0;
  height: 15px;
  padding: 0 2px;
  border: 1px solid #212121;
  border-radius: 3px;
  outline: 0;
  background: #2a2a2a;
`;
const NameField = styled(Field)`
  margin-left: 2px;
  font-weight: 600;
`;
const Tick = styled.span`
  display: grid;
  flex: none;
  place-items: center;
  width: 11px;
  height: 11px;
  border-radius: 2px;
  background: #282828;
  color: #eee;
  input,
  svg {
    grid-area: 1 / 1;
  }
  input {
    width: 11px;
    height: 11px;
    border: 1px solid #202020;
    border-radius: 2px;
    appearance: none;
  }
  svg {
    pointer-events: none;
  }
`;
const CompBar = styled.div`
  display: flex;
  flex: none;
  align-items: center;
  height: 17px;
  padding: 0 9px 0 2px;
  border-top: 1px solid #1a1a1a;
  background: #3e3e3e;
  b {
    font-weight: 600;
  }
`;
const IconSlot = styled.span`
  display: grid;
  place-items: center;
  width: 16px;
`;
const CheckSlot = styled.span`
  width: 17px;
  padding-left: 2px;
`;
const CompTools = styled.span`
  display: flex;
  align-items: center;
  gap: 8px;
  margin-left: auto;
`;
const CompBody = styled.div`
  flex: none;
  padding: ${(p) => (p.$rect ? 5 : 3)}px 4px 6px 14px;
`;
const PropRow = styled.div`
  display: grid;
  grid-template-columns: 181fr 274fr;
  align-items: center;
  min-height: 16px;
`;
const PropLabel = styled.label`
  position: relative;
  padding-left: ${(p) => p.$indent || 0}px;
`;
const PropFold = styled.span`
  position: absolute;
  top: 2px;
  left: -9px;
  display: flex;
`;
const PropValue = styled.div`
  position: relative;
  display: flex;
  align-items: center;
  min-width: 0;
  padding-left: ${(p) => (p.$indent ? 4 : 2)}px;
`;
const Triple = styled.div`
  display: grid;
  grid-template-columns: repeat(3, minmax(0, 1fr));
  gap: 2px;
`;
const Axis = styled.label`
  display: flex;
  align-items: center;
  gap: 3px;
  padding-left: ${(p) => (p.$inset ? 2 : 0)}px;
`;
const AnchorPreset = styled.div`
  display: grid;
  grid-template-columns: 14px 30px;
  align-content: start;
  justify-items: center;
  height: 58px;
  margin-left: -7px;
  font-size: 9px;
  line-height: 14px;
  span:first-child {
    grid-column: 2;
    height: 17px;
  }
  svg {
    grid-column: 2;
  }
`;
const Sideways = styled.span`
  grid-row: 2;
  justify-self: start;
  line-height: 9px;
  text-align: center;
  transform: rotate(180deg);
  writing-mode: vertical-rl;
`;
const EdgeGrid = styled.div`
  display: grid;
  grid-template-columns: repeat(3, minmax(0, 1fr));
  column-gap: 2px;
`;
const EdgeLabel = styled.label`
  display: flex;
  flex-direction: column;
  height: 29px;
  line-height: 14px;
`;
const ModeButtons = styled.div`
  display: flex;
  gap: 1px;
  align-self: end;
  justify-self: end;
  border-radius: 3px;
  overflow: hidden;
  button {
    display: grid;
    place-items: center;
    width: 20px;
    height: 15px;
    background: #525252;
    color: #8c8c8c;
  }
`;
const Space = styled.div`
  height: 7px;
`;
const ObjectField = styled.button`
  display: flex;
  flex: 1;
  align-items: center;
  gap: 1px;
  height: 15px;
  padding: 0 2px;
  border: 1px solid #212121;
  border-radius: 3px;
  background: #2a2a2a;
`;
const ColorButton = styled.button`
  flex: 1;
  height: 13px;
  margin-right: 22px;
  border-bottom: 2px solid #fff;
  background: #a80000;
`;
const Ellipse = styled.svg`
  position: absolute;
  z-index: 3;
  top: -9px;
  left: -19px;
  width: 120px;
  height: 32px;
  fill: none;
  stroke: #c1272d;
  stroke-width: 3;
`;
const MaterialHeader = styled.div`
  display: flex;
  flex: none;
  gap: 1px;
  height: 44px;
  padding: 7px 4px 0 2px;
  border-top: 1px solid #1f1f1f;
  background: #3c3c3c;
  > ${FoldSlot} {
    align-self: flex-end;
    padding-bottom: 5px;
  }
`;
const Preview = styled.div`
  width: 20px;
  height: 20px;
  background: #fff;
`;
const MaterialInfo = styled.div`
  flex: 1;
  padding-left: 6px;
`;
const MaterialName = styled.div`
  margin: -4px 0 5px 2px;
  color: #999;
  font-size: 11px;
  line-height: 14px;
`;
const ShaderRow = styled.div`
  display: flex;
  align-items: center;
  gap: 7px;
  color: #7c7c7c;
`;
const Strip = styled.div`
  flex: none;
  height: 10px;
  border: solid #222;
  border-width: 1px 0;
`;
const AddComponent = styled.button`
  flex: none;
  align-self: center;
  width: 184px;
  height: 19px;
  margin-top: 6px;
  border-radius: 3px;
  background: #585858;
  color: #e4e4e4;
`;
const PreviewBar = styled.div`
  display: flex;
  flex: none;
  align-items: center;
  gap: 4px;
  height: 18px;
  margin-top: auto;
  padding: 0 5px;
  border-top: 1px solid #232323;
  background: #3c3c3c;
  button {
    display: flex;
    align-items: center;
    gap: 3px;
    font-weight: 600;
  }
`;
const Grip = styled.span`
  flex: 1;
  height: 4px;
  border: solid #555;
  border-width: 1px 0;
`;
const Picker = styled.aside`
  position: absolute;
  z-index: 2;
  top: 282px;
  right: 6px;
  width: 186px;
  padding-bottom: 8px;
  background: #3c3c3c;
  box-shadow: 0 1px 4px rgba(0, 0, 0, 0.4);
`;
const PickerTitle = styled.div`
  display: flex;
  align-items: center;
  justify-content: space-between;
  height: 24px;
  padding: 0 1px 0 6px;
  background: #fff;
  color: #222;
  font-family: "Noto Sans", sans-serif;
  font-size: 9px;
  button {
    display: grid;
    place-items: center;
    width: 15px;
    height: 16px;
    margin-top: 4px;
    background: #c0504f;
    color: #fff;
  }
`;
const PickerTop = styled.div`
  display: flex;
  justify-content: space-between;
  padding: 12px 8px 0 9px;
`;
const CurrentColor = styled.div`
  width: 61px;
  height: 19px;
  border-radius: 2px;
  background: #a80000;
`;
const Wheel = styled.div`
  position: relative;
  display: grid;
  place-items: center;
  width: 172px;
  height: 172px;
  margin: 8px 0 0 7px;
  border-radius: 50%;
  background: conic-gradient(from 90deg, #f00, #f0f, #00f, #0ff, #0f0, #ff0, #f00);
`;
const WheelHole = styled.div`
  display: grid;
  place-items: center;
  width: 136px;
  height: 136px;
  border-radius: 50%;
  background: #3c3c3c;
`;
const Shade = styled.div`
  width: 85px;
  height: 85px;
  background: linear-gradient(transparent, #000), linear-gradient(90deg, #fff, #f00);
`;
const Knob = styled.span`
  position: absolute;
  top: ${(p) => p.$y}px;
  left: ${(p) => p.$x}px;
  width: ${(p) => p.$size}px;
  height: ${(p) => p.$size}px;
  border: ${(p) => (p.$fill ? 2 : 1)}px solid #fff;
  border-radius: 50%;
  background: ${(p) => p.$fill || "none"};
  transform: translate(-50%, -50%);
`;
const ModeSelect = styled.div`
  display: flex;
  width: 65px;
  margin: 10px 8px 4px auto;
  select {
    padding-left: 2px;
  }
`;
const Channel = styled.div`
  display: grid;
  grid-template-columns: 9px 117px 36px;
  column-gap: 4px;
  align-items: center;
  height: 21px;
  padding: 0 8px;
`;
const ChannelSlider = styled.input`
  width: 100%;
  height: 13px;
  margin: 0;
  appearance: none;
  background: ${(p) => p.$track};
  &::-webkit-slider-thumb {
    width: 3px;
    height: 13px;
    background: #fff;
    appearance: none;
  }
`;
const HexRow = styled.div`
  position: relative;
  display: grid;
  grid-template-columns: 1fr 66px;
  align-items: center;
  height: 20px;
  padding: 0 8px;
`;
const HexFrame = styled.span`
  position: absolute;
  top: -4px;
  right: -2px;
  width: 93px;
  height: 27px;
  border: 3px solid #c1272d;
  pointer-events: none;
`;
const SwatchHead = styled.div`
  display: flex;
  align-items: center;
  gap: 3px;
  height: 17px;
  padding: 0 15px 0 9px;
  svg:last-child {
    margin-left: auto;
  }
`;
const PresetRow = styled.div`
  display: flex;
  align-items: center;
  gap: 7px;
  height: 12px;
  padding-left: 9px;
  color: #7a7a7a;
`;
const Preset = styled.button`
  width: 9px;
  height: 9px;
  border: 1px solid #777;
  background: #a80000;
  box-shadow: inset 0 0 0 1px #222;
`;
const StatusBar = styled.footer`
  display: flex;
  flex: none;
  align-items: center;
  gap: 8px;
  height: 15px;
  padding: 0 4px 0 2px;
  background: #191919;
`;
const StatusText = styled.span`
  flex: 1;
  margin-left: -5px;
  color: #cfa545;
`;

export default App;
